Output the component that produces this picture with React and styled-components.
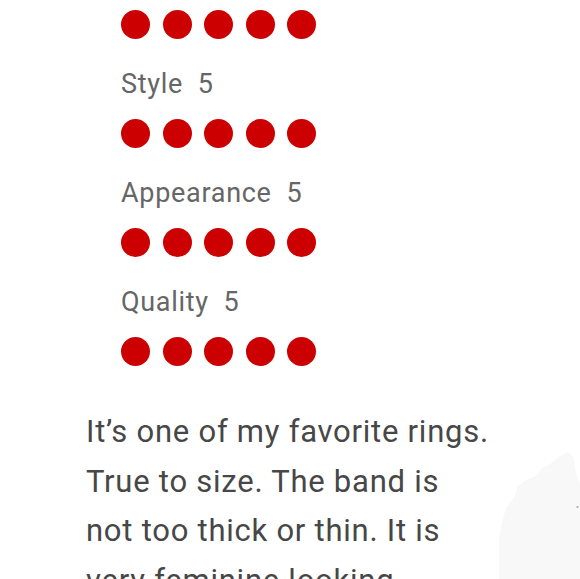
import React from 'react';
import styled, { createGlobalStyle } from 'styled-components';

const GlobalStyle = createGlobalStyle`
  html, body {
    margin: 0;
    padding: 0;
    background: #ffffff;
  }
  body {
    font-family: Roboto, "Liberation Sans", sans-serif;
    overflow: hidden;
  }
`;

const Page = styled('div')`
  position: relative;
  width: 580px;
  height: 579px;
  overflow: hidden;
  background: #ffffff;
`;

const Ratings = styled('div')`
  position: relative;
  display: flex;
  flex-direction: column;
  padding: 10px 0 0 121px;
`;

const Dots = styled('div')`
  display: flex;
  gap: 12.5px;
  height: 29px;
  margin-bottom: ${props => props.last ? '0' : '26.5px'};
`;

const Dot = styled('span')`
  display: block;
  width: 29px;
  height: 29px;
  border-radius: 50%;
  background: ${props => props.filled ? '#cc0000' : '#e5e5e5'};
`;

const Label = styled('div')`
  font-size: 27px;
  line-height: 36px;
  letter-spacing: 0.7px;
  color: #666666;
  margin-bottom: 17.5px;
  white-space: pre;
`;

const Review = styled('p')`
  position: relative;
  margin: 41px 0 0 86px;
  width: 408px;
  font-size: 31px;
  line-height: 49.5px;
  letter-spacing: 0.75px;
  color: #474747;
`;

const Backdrop = styled('svg')`
  position: absolute;
  right: 0;
  bottom: 0;
  pointer-events: none;
`;

const ratings = [
  { label: 'Style', score: 5 },
  { label: 'Appearance', score: 5 },
  { label: 'Quality', score: 5 },
];

const DotRow = ({ score, last }) => (
  <Dots last={last}>
    {[0, 1, 2, 3, 4].map(i => <Dot key={i} filled={i < score} />)}
  </Dots>
);

const App = () => {
  return <Page>
    <GlobalStyle />
    <Backdrop width="100" height="139" viewBox="0 0 100 139">
      <path
        d="M19 139 L19 100 L22 82 L26 68 L34 58 L38 46 L46 40 L56 36 L62 28 L70 24 L80 16 L88 12 L94 18 L96 34 L100 44 L100 139 Z"
        fill="#f8f8f8"
      />
      <circle cx="97.5" cy="67" r="1.1" fill="#aaaaaa" />
    </Backdrop>
    <Ratings>
      <DotRow score={5} />
      {ratings.map((r, i) => (
        <React.Fragment key={r.label}>
          <Label>{`${r.label}  ${r.score}`}</Label>
          <DotRow score={r.score} last={i === ratings.length - 1} />
        </React.Fragment>
      ))}
    </Ratings>
    <Review>
      It’s one of my favorite rings. True to size. The band is not too thick or thin. It is very feminine looking.
    </Review>
  </Page>;
};

export default App;
